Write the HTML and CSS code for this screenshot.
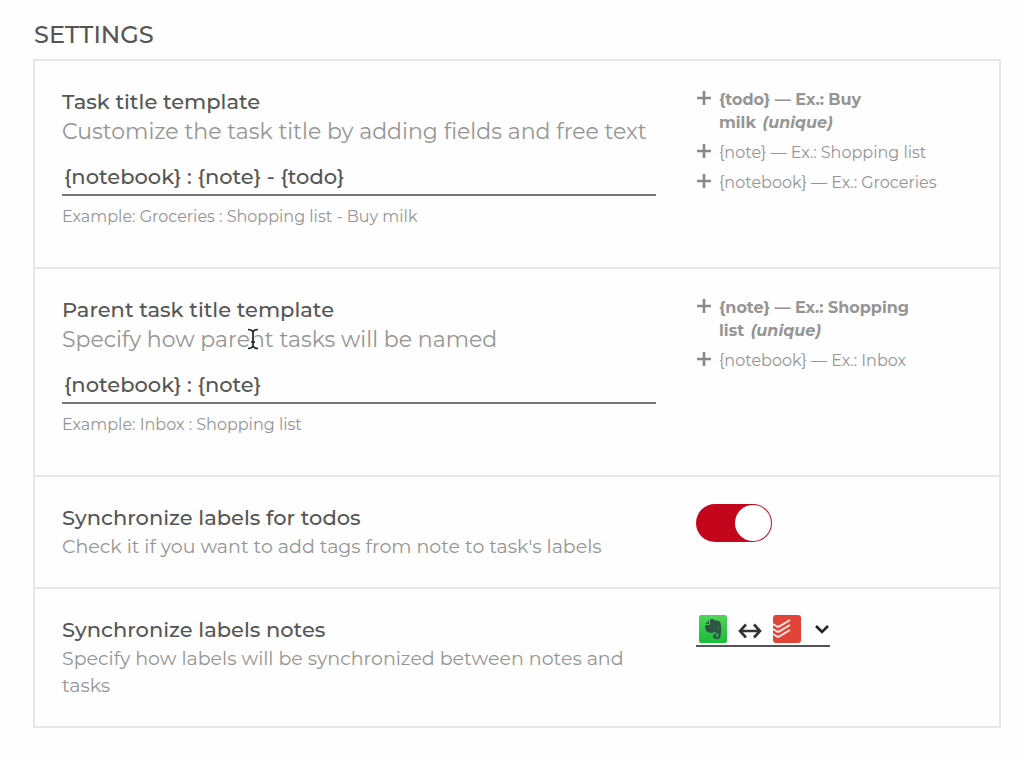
FILE: index.html
```html
<!DOCTYPE html>
<html lang="en">
<head>
  <meta charset="UTF-8">
  <meta name="viewport" content="width=device-width, initial-scale=1.0">
  <title>Settings</title>
  <link rel="stylesheet" href="styles.css">
</head>
<body>

<svg class="sprite" aria-hidden="true">
  <symbol id="plus" viewBox="0 0 16 16">
    <path d="M8 1v14M1 8h14" fill="none" stroke="currentColor" stroke-width="2.600"/>
  </symbol>
</svg>

<main class="page">
  <h1>SETTINGS</h1>

  <form class="settings">
    <section class="row">
      <div class="main">
        <label class="title" for="taskTitle">Task title template</label>
        <p class="desc large">Customize the task title by adding fields and free text</p>
        <input class="template" type="text" id="taskTitle" value="{notebook} : {note} - {todo}">
        <p class="example">Example: Groceries : Shopping list - Buy milk</p>
      </div>
      <div class="side fields">
        <button type="button" class="field required"><svg><use href="#plus"/></svg><span>{todo} — Ex.: Buy milk&nbsp;<em>(unique)</em></span></button>
        <button type="button" class="field"><svg><use href="#plus"/></svg><span>{note} — Ex.: Shopping list</span></button>
        <button type="button" class="field"><svg><use href="#plus"/></svg><span>{notebook} — Ex.: Groceries</span></button>
      </div>
    </section>

    <section class="row">
      <div class="main">
        <label class="title" for="parentTitle">Parent task title template</label>
        <div class="hovered">
          <p class="desc large">Specify how parent tasks will be named</p>
          <svg class="cursor" viewBox="0 0 12 22" aria-hidden="true">
            <path d="M1 1.500Q5 1.500 6 4Q7 1.500 11 1.500M6 4V18M1 20.500Q5 20.500 6 18Q7 20.500 11 20.500M4 14H8" fill="none" stroke="#fff" stroke-width="3"/>
            <path d="M1 1.500Q5 1.500 6 4Q7 1.500 11 1.500M6 4V18M1 20.500Q5 20.500 6 18Q7 20.500 11 20.500M4 14H8" fill="none" stroke="#222" stroke-width="1.700"/>
          </svg>
        </div>
        <input class="template" type="text" id="parentTitle" value="{notebook} : {note}">
        <p class="example">Example: Inbox : Shopping list</p>
      </div>
      <div class="side fields">
        <button type="button" class="field required"><svg><use href="#plus"/></svg><span>{note} — Ex.: Shopping list&nbsp;<em>(unique)</em></span></button>
        <button type="button" class="field"><svg><use href="#plus"/></svg><span>{notebook} — Ex.: Inbox</span></button>
      </div>
    </section>

    <section class="row">
      <div class="main">
        <label class="title" for="syncTodos">Synchronize labels for todos</label>
        <p class="desc">Check it if you want to add tags from note to task's labels</p>
      </div>
      <div class="side">
        <input class="toggle" type="checkbox" role="switch" id="syncTodos" checked>
      </div>
    </section>

    <section class="row">
      <div class="main">
        <label class="title" for="syncNotes">Synchronize labels notes</label>
        <p class="desc">Specify how labels will be synchronized between notes and tasks</p>
      </div>
      <div class="side">
        <div class="direction">
          <svg class="app" viewBox="0 0 28 28" aria-hidden="true">
            <defs>
              <linearGradient id="green" x1="0" y1="0" x2="0" y2="1">
                <stop offset="0" stop-color="#4fd35c"/>
                <stop offset="1" stop-color="#17bd38"/>
              </linearGradient>
            </defs>
            <rect width="28" height="28" rx="2" fill="url(#green)"/>
            <path d="M11 4.500C13 3.500 15 4 15.500 5.500C18 5.500 21 6 21.500 8C22.500 12 22.300 18 21.500 21C21 23.500 19.500 24 17.500 24C15 24 14 22.800 14 21C14 19.500 15.500 18.500 17.500 18.800V20.300C16.300 20.300 16.200 21.800 17.500 21.800C19 21.800 19.500 21 19.500 19C18 18.500 16.500 18 15.800 16.800C14 18.500 11 18 8.500 17C6.500 16 6 12.500 6.200 10H9.500C10.500 10 11 9.500 11 8.500Z" fill="#315545"/>
            <path d="M6.500 9L10 5.200V8.200Q10 9 9.200 9Z" fill="#315545"/>
            <path d="M17.500 13.500Q18.800 12 20 13.800Q18.800 13.200 17.500 13.500" fill="#2fc84a"/>
          </svg>
          <svg class="arrows" viewBox="0 0 24 16" aria-hidden="true">
            <path d="M2 8H22M8 1.500L2 8L8 14.500M16 1.500L22 8L16 14.500" fill="none" stroke="#333" stroke-width="2.600"/>
          </svg>
          <svg class="app" viewBox="0 0 28 28" aria-hidden="true">
            <rect width="28" height="28" rx="3" fill="#e14436"/>
            <path d="M0 9L4 11.500Q5 12 6 11.500L17 5M0 14L4 16.500Q5 17 6 16.500L17 10M0 19L4 21.500Q5 22 6 21.500L17 15" fill="none" stroke="#fbe4df" stroke-width="2"/>
          </svg>
          <svg class="chevron" viewBox="0 0 16 10" aria-hidden="true">
            <path d="M2 2L8 8L14 2" fill="none" stroke="#222" stroke-width="2.600"/>
          </svg>
          <select id="syncNotes">
            <option value="both"></option>
          </select>
        </div>
      </div>
    </section>
  </form>
</main>

</body>
</html>
```
FILE: styles.css
```css
* { box-sizing: border-box; }

body {
  margin: 0;
  background: #fefefe;
  font-family: Montserrat, Inter, sans-serif;
  color: #555;
}

h1, p { margin: 0; }

.sprite {
  position: absolute;
  width: 0;
  height: 0;
}

.page {
  padding: 20px 23px 28px 33px;
}

h1 {
  font-size: 24px;
  font-weight: 500;
  line-height: 30px;
  margin: 0 0 9px 1px;
}

.settings {
  border: 2px solid #e6e6e6;
}

.row {
  display: grid;
  grid-template-columns: 594fr 277fr;
  gap: 40px;
  padding: 26px 26px 27px 27px;
}

.row + .row {
  border-top: 2px solid #e6e6e6;
}

.title {
  display: block;
  font-size: 21px;
  font-weight: 500;
  line-height: 30px;
}

.desc {
  font-size: 19px;
  line-height: 27px;
  color: #959595;
}

.desc.large {
  font-size: 22px;
  line-height: 30px;
}

.template {
  display: block;
  width: 100%;
  height: 37px;
  margin: 12px 0 9px;
  padding: 0 2px;
  border: 0;
  border-bottom: 2px solid #777;
  background: none;
  font: inherit;
  font-size: 21px;
  font-weight: 500;
  color: #555;
  outline: none;
}

.example {
  font-size: 16px;
  line-height: 24px;
  color: #959595;
  margin-bottom: 11px;
}

.hovered { position: relative; }

/* text cursor resting over the description */
.cursor {
  position: absolute;
  left: 185px;
  top: 3px;
  width: 12px;
  height: 22px;
}

.fields {
  display: flex;
  flex-direction: column;
  align-items: flex-start;
  gap: 7px;
  padding-top: 1px;
}

.field {
  display: flex;
  gap: 7px;
  padding: 0;
  border: 0;
  background: none;
  font: inherit;
  font-size: 16px;
  line-height: 23px;
  color: #959595;
  text-align: left;
  cursor: pointer;
}

.field svg {
  flex: none;
  width: 16px;
  height: 16px;
  margin-top: 2px;
  color: #888;
}

.required { font-weight: 700; }

.field em { padding-left: 2px; }

.toggle {
  appearance: none;
  display: flex;
  width: 76px;
  height: 38px;
  margin: 1px 0 0;
  padding: 1px;
  border-radius: 19px;
  background: #aaa;
  cursor: pointer;
}

.toggle::before {
  content: "";
  width: 36px;
  height: 36px;
  border-radius: 50%;
  background: #fff;
}

.toggle:checked {
  justify-content: flex-end;
  background: #c4061d;
}

.direction {
  position: relative;
  display: inline-flex;
  align-items: center;
  height: 32px;
  padding: 0 0 3px 3px;
  border-bottom: 2px solid #555;
}

.app {
  width: 28px;
  height: 28px;
}

.arrows {
  width: 24px;
  height: 16px;
  margin: 4px 11px 0;
}

.chevron {
  width: 16px;
  height: 10px;
  margin-left: 13px;
}

/* the real control covers the drawn one */
.direction select {
  position: absolute;
  inset: 0;
  width: 100%;
  opacity: 0;
  cursor: pointer;
}
```
